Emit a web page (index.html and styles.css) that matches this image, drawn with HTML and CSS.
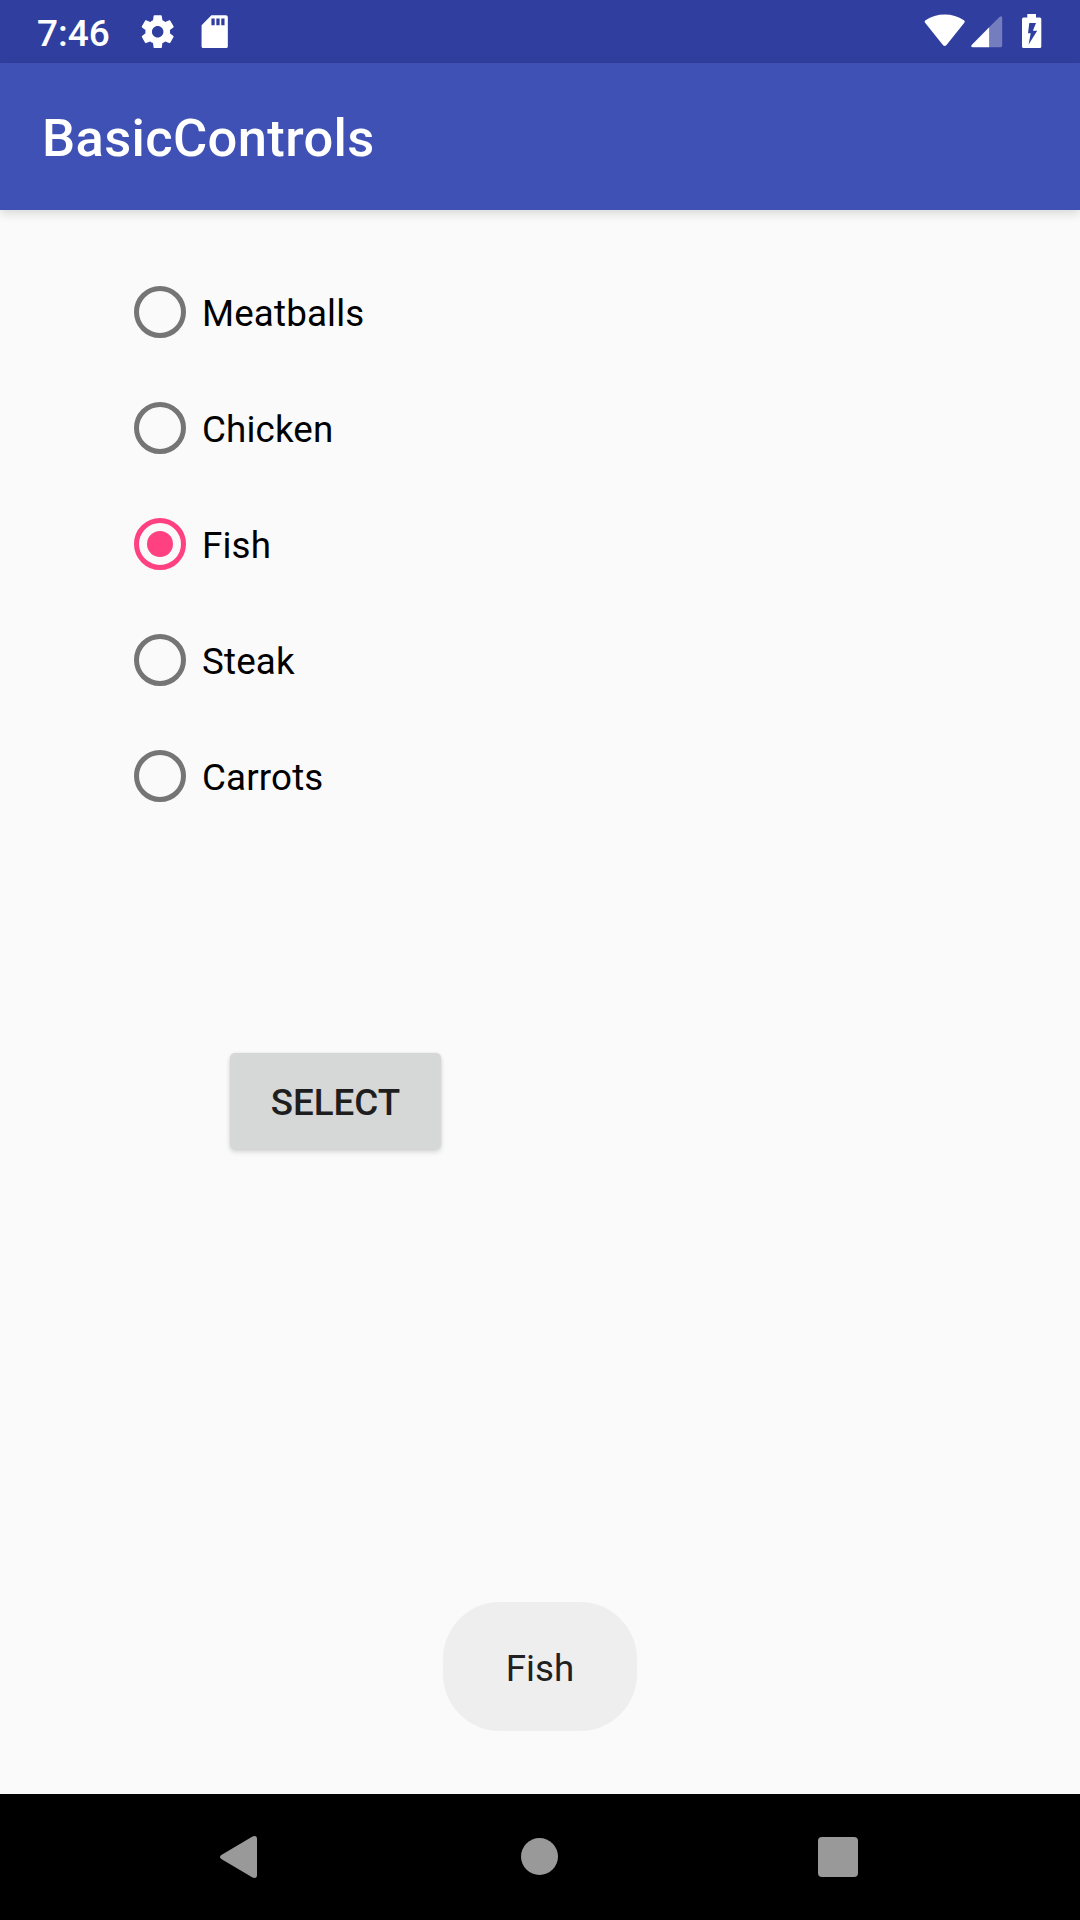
FILE: index.html
```html
<!DOCTYPE html>
<html lang="en">
<head>
<meta charset="utf-8">
<title>BasicControls</title>
<link rel="stylesheet" href="styles.css">
</head>
<body>
<div class="screen">
  <div class="status-bar">
    <span class="clock">7:46</span>
    <svg class="icon-settings" viewBox="0 0 24 24"><path d="M19.43 12.98c.04-.32.07-.64.07-.98s-.03-.66-.07-.98l2.11-1.65c.19-.15.24-.42.12-.64l-2-3.46c-.12-.22-.39-.3-.61-.22l-2.49 1c-.52-.4-1.08-.73-1.69-.98l-.38-2.65C14.46 2.18 14.25 2 14 2h-4c-.25 0-.46.18-.49.42l-.38 2.65c-.61.25-1.17.59-1.69.98l-2.49-1c-.23-.09-.49 0-.61.22l-2 3.46c-.13.22-.07.49.12.64l2.11 1.65c-.04.32-.07.65-.07.98s.03.66.07.98l-2.11 1.65c-.19.15-.24.42-.12.64l2 3.46c.12.22.39.3.61.22l2.49-1c.52.4 1.08.73 1.69.98l.38 2.65c.03.24.24.42.49.42h4c.25 0 .46-.18.49-.42l.38-2.65c.61-.25 1.17-.59 1.69-.98l2.49 1c.23.09.49 0 .61-.22l2-3.46c.12-.22.07-.49-.12-.64l-2.11-1.65zM12 15.5c-1.93 0-3.5-1.57-3.5-3.5s1.57-3.5 3.5-3.5 3.5 1.57 3.5 3.5-1.57 3.5-3.5 3.5z"/></svg>
    <svg class="icon-sd" viewBox="0 0 24 24"><path d="M18.800 2h-8.800L4.020 8 4 20.800c0 .7.5 1.200 1.200 1.200h13.600c.7 0 1.200-.5 1.200-1.200V3.200c0-.7-.5-1.200-1.200-1.200zM12 8h-2V4h2v4zm3 0h-2V4h2v4zm3 0h-2V4h2v4z"/></svg>
    <svg class="icon-wifi" viewBox="0 0 42 34"><path d="M1.100 8.700Q-.1 7.300 1.500 6.200Q10 .6 20.700 .6T39.900 6.200Q41.400 7.300 40.300 8.700L22.500 31Q20.700 33.200 18.900 31Z"/></svg>
    <svg class="icon-signal" viewBox="0 0 32 32"><path class="dim" d="M18.200 11.200L28.700 .8Q31.200-1 31.200 2V29.500Q31.200 31.200 29.500 31.200H18.200Z"/><path d="M18.200 11.200V31.200H1.800Q-.8 31 .9 28.700Z"/></svg>
    <svg class="icon-battery" viewBox="0 0 20 34"><path fill-rule="evenodd" d="M5.300 0H14V3.500H17.800Q19.300 3.500 19.300 5V32.400Q19.300 34 17.800 34H1.600Q0 34 0 32.400V5Q0 3.500 1.600 3.500H5.300ZM7.300 9L6 19.300H8.700L6.600 30.500L15.200 16.700H10.900L14 9Z"/></svg>
  </div>
  <header class="app-bar"><h1 class="title">BasicControls</h1></header>
  <main class="content">
    <div class="options" role="radiogroup">
      <label class="option"><input class="radio" type="radio" name="meal"><span>Meatballs</span></label>
      <label class="option"><input class="radio" type="radio" name="meal"><span>Chicken</span></label>
      <label class="option"><input class="radio" type="radio" name="meal" checked><span>Fish</span></label>
      <label class="option"><input class="radio" type="radio" name="meal"><span>Steak</span></label>
      <label class="option"><input class="radio" type="radio" name="meal"><span>Carrots</span></label>
    </div>
    <button class="select" type="button">SELECT</button>
    <div class="toast">Fish</div>
  </main>
  <nav class="nav-bar">
    <svg class="nav-back" viewBox="0 0 37 42"><path d="M1.300 19L32.500 .5Q37 -1 37 3V39Q37 43 32.500 41.500L1.300 23Q-1.300 21 1.300 19Z"/></svg>
    <svg class="nav-home" viewBox="0 0 37 37"><circle cx="18.500" cy="18.500" r="18.500"/></svg>
    <svg class="nav-recent" viewBox="0 0 40 40"><rect width="40" height="40" rx="4"/></svg>
  </nav>
</div>
</body>
</html>
```
FILE: styles.css
```css
* { box-sizing: border-box; }

body {
  margin: 0;
  background: #fafafa;
  font-family: Roboto, sans-serif;
  font-size: 36.75px;
}

svg { display: block; fill: #fff; flex: none; }

.screen {
  width: 1080px;
  height: 1920px;
  display: flex;
  flex-direction: column;
  overflow: hidden;
}

.status-bar {
  height: 63px;
  flex: none;
  display: flex;
  align-items: flex-start;
  padding: 0 38px 0 37px;
  background: #303f9f;
  color: #fff;
}

.clock {
  width: 100.5px;
  line-height: 43px;
  margin-top: 12px;
  font-size: 37px;
  font-weight: 500;
}

.icon-settings { width: 39.4px; height: 39.4px; margin-top: 12px; }
.icon-sd { width: 39.4px; height: 39.4px; margin: 12px auto 0 18.500px; }
.icon-wifi { width: 42px; height: 34px; margin-top: 13.500px; }
.icon-signal { width: 32px; height: 32px; margin: 16px 0 0 5px; }
.icon-battery { width: 20px; height: 34px; margin: 14px 0 0 19.500px; }
.dim { opacity: 0.33; }

.app-bar {
  height: 147px;
  flex: none;
  display: flex;
  align-items: center;
  padding: 3px 42px 0;
  background: #3f51b5;
  box-shadow: 0 3px 10px rgba(0, 0, 0, 0.15);
}

.title {
  margin: 0;
  color: #fff;
  font-size: 52.5px;
  font-weight: 500;
  line-height: 62px;
  letter-spacing: 0.35px;
}

.content {
  flex: 1;
  display: flex;
  flex-direction: column;
  align-items: flex-start;
  padding: 44px 0 63px;
}

.options {
  display: flex;
  flex-direction: column;
  padding-left: 134px;
}

.option {
  height: 116px;
  display: flex;
  align-items: center;
  gap: 16px;
  color: #000;
  letter-spacing: 0.15px;
}

.option span { padding-top: 4px; line-height: 44px; }

.radio {
  appearance: none;
  width: 52px;
  height: 52px;
  margin: 0;
  border: 5.25px solid #757575;
  border-radius: 50%;
  display: grid;
  place-items: center;
}

.radio:checked { border-color: #ff4081; }

.radio:checked::before {
  content: "";
  width: 26px;
  height: 26px;
  border-radius: 50%;
  background: #ff4081;
}

.select {
  width: 211px;
  height: 96px;
  margin: 219px 0 0 230px;
  padding: 3px 0 0;
  border: 0;
  border-radius: 5px;
  background: #d6d7d7;
  color: #1e1e1e;
  font: 500 36.75px/44px Roboto, sans-serif;
  box-shadow: 0 3px 5px rgba(0, 0, 0, 0.15), 0 0 3px rgba(0, 0, 0, 0.08);
}

.toast {
  height: 129px;
  width: 194px;
  margin: auto auto 0;
  border-radius: 57px;
  background: #eee;
  color: #212121;
  line-height: 133px;
  text-align: center;
}

.nav-bar {
  height: 126px;
  flex: none;
  display: grid;
  grid-template-columns: 301px 297px 40px;
  align-items: center;
  padding-left: 220px;
  background: #000;
}

.nav-bar svg { fill: #999; }
.nav-back { width: 37px; height: 42px; }
.nav-home { width: 37px; height: 37px; margin-bottom: 1px; }
.nav-recent { width: 40px; height: 40px; }
```
